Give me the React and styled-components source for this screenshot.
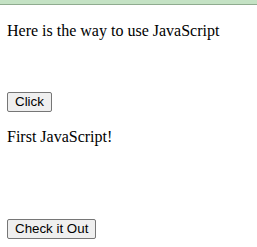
import React from "react";
import styled, { createGlobalStyle } from "styled-components";

const Global = createGlobalStyle`
  html, body { margin: 0; padding: 0; background: #fff; }
  body { font-family: "Liberation Serif", "Times New Roman", serif; font-size: 16px; color: #000; }
`;

const TopBar = styled.div`
  height: 4px;
  background: #c4e2c4;
  border-bottom: 1px solid #8fab8f;
`;

const Page = styled.div`
  padding: 0 7px;
`;

const Text = styled.p`
  margin: ${(p) => p.$top}px 0 0;
  line-height: 18px;
`;

const Button = styled.button`
  display: block;
  margin-top: ${(p) => p.$top}px;
  font-family: "Liberation Sans", Arial, sans-serif;
  font-size: 13.333px;
  line-height: 16px;
  padding: 1px 7px;
  color: #000;
  background: #efefef;
  border: 1px solid #767676;
  border-radius: 2px;
`;

export default function App() {
  return (
    <>
      <Global />
      <TopBar />
      <Page>
        <Text $top={17}>Here is the way to use JavaScript</Text>
        <Button $top={52}>Click</Button>
        <Text $top={16}>First JavaScript!</Text>
        <Button $top={73}>Check it Out</Button>
      </Page>
    </>
  );
}
